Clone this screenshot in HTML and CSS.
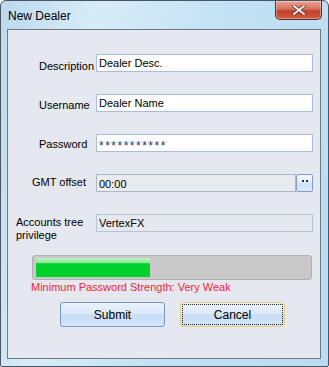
FILE: index.html
```html
<!DOCTYPE html>
<html lang="en">
<head>
    <meta charset="UTF-8">
    <title>New Dealer</title>
    <link rel="stylesheet" href="styles.css">
</head>
<body>
    <div class="window">
        <div class="titlebar">
            <span class="title">New Dealer</span>
            <button class="close" title="Close">
                <svg width="14" height="10" viewBox="0 0 14 10">
                    <path d="M2 1 L12 9 M12 1 L2 9" stroke="#5a2018" stroke-width="3.2" stroke-linecap="square"/>
                    <path d="M2 1 L12 9 M12 1 L2 9" stroke="#ffffff" stroke-width="1.8" stroke-linecap="square"/>
                </svg>
            </button>
        </div>

        <div class="client">
            <div class="row">
                <label class="lbl lbl-desc">Description</label>
                <div class="field">Dealer Desc.</div>
            </div>
            <div class="row">
                <label class="lbl lbl-user">Username</label>
                <div class="field">Dealer Name</div>
            </div>
            <div class="row">
                <label class="lbl lbl-pass">Password</label>
                <div class="field pass">***********</div>
            </div>
            <div class="row">
                <label class="lbl lbl-gmt">GMT offset</label>
                <div class="field gmt">00:00</div>
                <button class="dots"><span></span><span></span></button>
            </div>
            <div class="row row-tree">
                <label class="lbl lbl-tree">Accounts tree<br>privilege</label>
                <div class="field readonly">VertexFX</div>
            </div>

            <div class="strength">
                <div class="strength-fill" style="width: 114px"></div>
            </div>
            <div class="strength-text">Minimum Password Strength: Very Weak</div>

            <div class="actions">
                <button class="btn">Submit</button>
                <button class="btn focused"><span>Cancel</span></button>
            </div>
        </div>
    </div>
</body>
</html>
```

FILE: styles.css
```css
body {
    margin: 0;
    background: #ffffff;
    font-family: "Liberation Sans", Arial, sans-serif;
    font-size: 11px;
}
.window {
    width: 329px;
    height: 367px;
    box-sizing: border-box;
    border: 1px solid #4a5563;
    border-radius: 6px 6px 2px 2px;
    background: linear-gradient(100deg, #bcd9ee 0%, #d8ecf8 25%, #c4e2f5 55%, #b9dcf2 100%);
    padding: 0 7px 7px 6px;
    display: flex;
    flex-direction: column;
}
.titlebar {
    height: 28px;
    display: flex;
    align-items: flex-start;
    justify-content: space-between;
}
.title {
    margin-top: 8px;
    margin-left: 1px;
    color: #000000;
    font-size: 12px;
}
.close {
    width: 47px;
    height: 19px;
    margin-right: -1px;
    border: 1px solid #5b2a24;
    border-top: none;
    border-radius: 0 0 5px 5px;
    background: linear-gradient(#e8a595 0%, #d6705a 45%, #c1412b 55%, #cf5a3e 100%);
    box-shadow: inset 0 0 0 1px rgba(255,255,255,0.35);
    display: flex;
    align-items: center;
    justify-content: center;
    padding: 0;
}
.client {
    flex: 1;
    border: 1px solid #6f7a88;
    background: #e5e8ee;
    padding-top: 24px;
}
.row {
    display: flex;
    align-items: flex-start;
    height: 18px;
    margin-bottom: 22px;
}
.row-tree {
    height: auto;
    margin-bottom: 13px;
}
.lbl {
    width: 88px;
    flex: none;
    box-sizing: border-box;
    line-height: 13px;
    color: #000000;
}
.lbl-desc { padding-left: 31px; padding-top: 6px; }
.lbl-user { padding-left: 31px; padding-top: 5px; }
.lbl-pass { padding-left: 31px; padding-top: 4px; }
.lbl-gmt { padding-left: 24px; padding-top: 2px; }
.lbl-tree { padding-left: 8px; padding-top: 2px; }
.field {
    width: 217px;
    height: 18px;
    box-sizing: border-box;
    border: 1px solid #a8bde0;
    background: #ffffff;
    padding-left: 2px;
    line-height: 16px;
    white-space: nowrap;
}
.pass {
    letter-spacing: 1.5px;
    color: #1a3a6a;
    font-size: 12px;
    line-height: 14px;
    padding-top: 4px;
}
.gmt {
    width: 200px;
    background: #e8ebf0;
    border-color: #a9b8cc;
    padding-top: 1px;
}
.readonly {
    background: #e5e8ee;
    border-color: #b7c3d6;
}
.dots {
    width: 17px;
    height: 18px;
    padding: 0;
    border: 1px solid #7f9dc8;
    border-radius: 2px;
    background: linear-gradient(#f2f7fd 0%, #e2ecf8 50%, #cfe0f4 51%, #dbe8f8 100%);
    display: flex;
    justify-content: center;
    align-items: flex-start;
    gap: 2px;
    padding-top: 5px;
}
.dots span {
    width: 2px;
    height: 2px;
    background: #20304a;
}
.strength {
    margin-left: 24px;
    width: 280px;
    height: 25px;
    box-sizing: border-box;
    border: 1px solid #b0b0b0;
    border-radius: 3px;
    background: #c9c9c9;
    padding: 2px 3px;
}
.strength-fill {
    height: 19px;
    background: linear-gradient(#c0f0c4 0%, #8ee89a 25%, #00d12a 30%, #00d12a 100%);
}
.strength-text {
    margin-left: 23px;
    margin-top: 1px;
    line-height: 13px;
    color: #f2223c;
}
.actions {
    display: flex;
    gap: 15px;
    margin-top: 8px;
    margin-left: 52px;
}
.btn {
    width: 105px;
    height: 25px;
    border: 1px solid #7894c9;
    border-radius: 3px;
    background: linear-gradient(#eaf3fd 0%, #dae9fb 48%, #c6dcf6 52%, #d6e6f9 100%);
    font-family: "Liberation Sans", Arial, sans-serif;
    font-size: 12px;
    color: #000000;
    padding: 0;
}
.focused {
    border-color: #e2cf8c;
    padding: 1px;
}
.focused span {
    display: block;
    height: 21px;
    line-height: 20px;
    border: 1px dotted #222222;
    box-sizing: border-box;
}
```
